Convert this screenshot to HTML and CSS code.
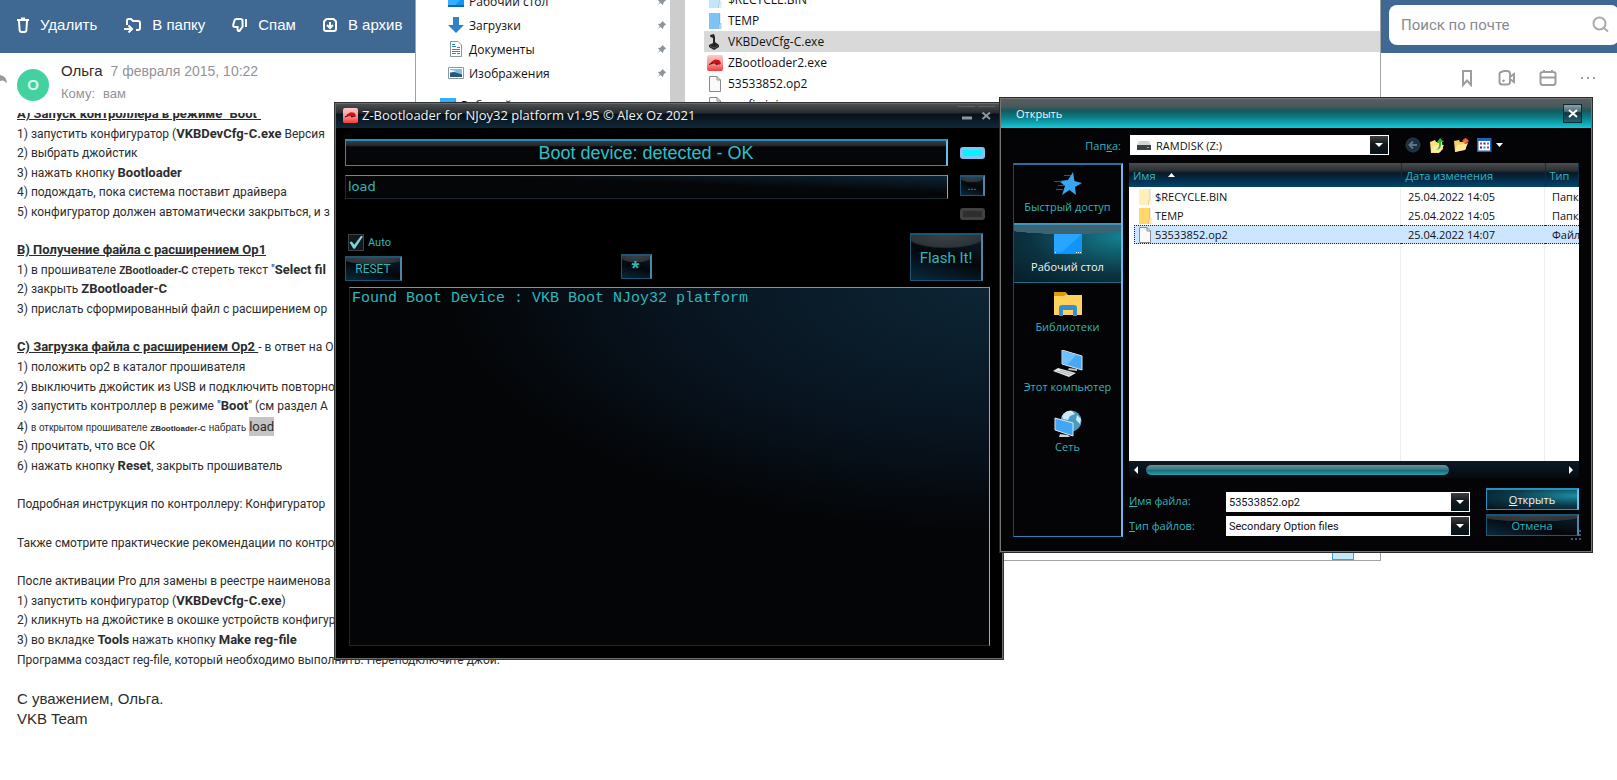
FILE: index.html
```
<!DOCTYPE html>
<html lang="ru">

<head>
  <meta charset="UTF-8" />
  <meta name="viewport" content="width=device-width, initial-scale=1.0" />
  <title>Z-Bootloader</title>
  <link rel="stylesheet" href="styles.css">
</head>

<body>
  <!-- shared icons -->
  <svg width="0" height="0" class="sprite" aria-hidden="true">
    <symbol id="pin" viewBox="0 0 12 12">
      <path d="M7 1 L11 5 L9.6 5.6 L8 7.6 L7.6 10 L4.8 7.4 L1 11 L4 6.8 L2 4.4 L4.4 4 L6.4 2.4 Z" fill="#8a959d" />
    </symbol>
    <symbol id="file" viewBox="0 0 16 16">
      <path d="M2.5 .5 H10 L13.5 4 V15.5 H2.5 Z" fill="#fafafa" stroke="#8b8b8b" />
      <path d="M10 .5 V4 H13.5" fill="none" stroke="#8b8b8b" />
    </symbol>
    <symbol id="desktop" viewBox="0 0 16 16">
      <path d="M0 1 H16 V14 H0 Z" fill="#1197f5" />
      <path d="M0 1 H16 V3 L5 14 H0 Z" fill="#35aeff" />
      <path d="M0 13 H16" stroke="#0a69b5" stroke-width="2" />
    </symbol>
    <symbol id="zboot" viewBox="0 0 16 16">
      <defs>
        <linearGradient id="zred" x1="0" y1="0" x2="0" y2="1">
          <stop offset="0" stop-color="#ffc9c9" />
          <stop offset=".5" stop-color="#f79a9a" />
          <stop offset="1" stop-color="#f33a3a" />
        </linearGradient>
      </defs>
      <rect width="16" height="16" rx="2" fill="url(#zred)" />
      <path d="M4 7 L8 4.5 L12 5 L14 8 L13 9.5 L9 8.5 L5 9 Z" fill="#d01414" />
      <path d="M2 9 L6 7 L5 9 L2 10 Z M8 8 L13 9 L9 10 Z" fill="#4a1010" />
    </symbol>
    <symbol id="folder" viewBox="0 0 16 16">
      <path d="M2 0 H13 V10 H14.5 V16 H2 Z" fill="currentColor" />
      <path d="M11 16 V12 L13 10 H14.5 V16 Z" fill="#fff" fill-opacity=".35" />
      <path d="M11.5 16 V12 L13 10.5 V0" fill="none" stroke="#000" stroke-opacity=".15" />
    </symbol>
  </svg>

  <div class="mail">
    <header class="mail-bar">
      <nav class="mail-tools">
        <button type="button">
          <svg width="12" height="16" viewBox="0 0 12 16" fill="none" stroke="#fff" stroke-width="2"><path d="M0 3 H12 M4 1.5 H8 M2 4 L2.6 13 Q2.8 15 4.6 15 H7.4 Q9.2 15 9.4 13 L10 4" /></svg>
          Удалить
        </button>
        <button type="button">
          <svg width="17" height="16" viewBox="0 0 17 16" fill="none" stroke="#fff" stroke-width="2"><path d="M3 8 V3.5 Q3 2 4.5 2 H7 L9 4 H14 Q16 4 16 6 V11 Q16 13 14 13 H12 M0 12 H7 M4.5 8.5 L8 12 L4.5 15.5" /></svg>
          В папку
        </button>
        <button type="button">
          <svg width="15" height="16" viewBox="0 0 15 16" fill="none" stroke="#fff" stroke-width="2"><path d="M14 2 V10 M10.5 3 L9 2 H4.5 Q3 2 2.5 3.4 L1.2 8 Q1 10 3 10 H5.6 V12.6 Q5.8 14.4 7.4 14 L10.6 9.5 Z" /></svg>
          Спам
        </button>
        <button type="button">
          <svg width="14" height="16" viewBox="0 0 14 16" fill="none" stroke="#fff" stroke-width="2"><path d="M3.5 2 H10.5 L13 4.5 V12 Q13 14 11 14 H3 Q1 14 1 12 V4.5 Z M7 5 V11 M4 8 L7 11 L10 8" /></svg>
          В архив
        </button>
      </nav>
      <label class="search">
        <input type="text" placeholder="Поиск по почте" aria-label="Поиск по почте" />
        <svg width="17" height="17" viewBox="0 0 17 17" fill="none" stroke="#a8abae" stroke-width="2"><circle cx="7.5" cy="7.5" r="6" /><path d="M12 12 L16 15.5" /></svg>
      </label>
    </header>

    <div class="letter-head">
      <svg class="reply" width="8" height="11" viewBox="0 0 8 11"><path d="M0 0 V8 Q4 6 7 11 Q7 3 0 2 Z" fill="#9a9a9a" /></svg>
      <div class="avatar">О</div>
      <div class="sender">
        <div class="from"><span class="name">Ольга</span><time>7 февраля 2015, 10:22</time></div>
        <div class="to"><span>Кому:</span><span>вам</span></div>
      </div>
      <div class="letter-tools">
        <button type="button" aria-label="Закладка"><svg width="16" height="18" viewBox="0 0 16 18"><path d="M4 2 H12 V16 L8 11.5 L4 16 Z" /></svg></button>
        <button type="button" aria-label="Видео"><svg width="18" height="18" viewBox="0 0 18 18"><path d="M3 3 L6 2 H9 Q12 2 12 5 V13 Q12 15.5 9 15.5 H4 Q1.5 15.5 1.5 13 V5 Q1.5 3.5 3 3 M12 8 L16 5 V13 L12 10 M4.5 12.5 L6.5 11" /></svg></button>
        <button type="button" aria-label="Календарь"><svg width="18" height="18" viewBox="0 0 18 18"><path d="M4 3 H14 Q16.5 3 16.5 5 V13.5 Q16.5 16 14 16 H4 Q1.5 16 1.5 13.5 V5 Q1.5 3 4 3 Z M1.5 8.5 H16.5 M5 1 V4 M13 1 V4" /></svg></button>
        <button type="button" aria-label="Ещё"><svg width="16" height="18" viewBox="0 0 16 18"><path d="M1 9 H3 M7 9 H9 M13 9 H15" /></svg></button>
      </div>
    </div>

    <main class="letter">
      <p>
        <b class="title">A) Запуск контроллера в режиме "Boot"</b><br>
        1) запустить конфигуратор (<b>VKBDevCfg-C.exe</b> Версия<br>
        2) выбрать джойстик<br>
        3) нажать кнопку <b>Bootloader</b><br>
        4) подождать, пока система поставит драйвера<br>
        5) конфигуратор должен автоматически закрыться, и з
      </p>
      <p>
        <b class="title">B) Получение файла с расширением Op1</b><br>
        1) в прошивателе <b class="small">ZBootloader-C</b> стереть текст "<b>Select fil</b><br>
        2) закрыть <b>ZBootloader-C</b><br>
        3) прислать сформированный файл с расширением ор
      </p>
      <p>
        <b class="title">C) Загрузка файла с расширением Op2 </b>- в ответ на О<br>
        1) положить op2 в каталог прошивателя<br>
        2) выключить джойстик из USB и подключить повторно<br>
        3) запустить контроллер в режиме "<b>Boot</b>" (см раздел A<br>
        4) <span class="small">в открытом прошивателе <b class="tiny">ZBootloader-C</b> набрать</span> <mark>load</mark><br>
        5) прочитать, что все ОК<br>
        6) нажать кнопку <b>Reset</b>, закрыть прошиватель
      </p>
      <p>Подробная инструкция по контроллеру: Конфигуратор</p>
      <p>Также смотрите практические рекомендации по контро</p>
      <p>
        После активации Pro для замены в реестре наименова<br>
        1) запустить конфигуратор (<b>VKBDevCfg-C.exe</b>)<br>
        2) кликнуть на джойстике в окошке устройств конфигур<br>
        3) во вкладке <b>Tools</b> нажать кнопку <b>Make reg-file</b><br>
        Программа создаст reg-file, который необходимо выполнить. Переподключите джой.
      </p>
      <p class="sign">С уважением, Ольга.<br>VKB Team</p>
    </main>
  </div>

  <section class="window explorer">
    <ul class="places">
      <li><svg width="16" height="16"><use href="#desktop" /></svg>Рабочий стол<svg class="pin" width="11" height="11"><use href="#pin" /></svg></li>
      <li><svg width="16" height="16" viewBox="0 0 16 16"><path d="M5 0 H11 V8 H16 L8 16 L0 8 H5 Z" fill="#2f82c9" /></svg>Загрузки<svg class="pin" width="11" height="11"><use href="#pin" /></svg></li>
      <li><svg width="16" height="16" viewBox="0 0 16 16"><path d="M2.5 .5 H10 L13.5 4 V15.5 H2.5 Z" fill="#fff" stroke="#8b979f" /><path d="M4 3.5 H7 M4 5.5 H8 M9 6.5 H12 M4 8.5 H12 M4 10.5 H12 M4 12.5 H8 M9 12.5 H12" stroke="#2c86c8" /></svg>Документы<svg class="pin" width="11" height="11"><use href="#pin" /></svg></li>
      <li><svg width="16" height="16" viewBox="0 0 16 16"><path d="M.5 2.5 H15.5 V13.5 H.5 Z" fill="#fff" stroke="#8b979f" /><path d="M2 4 H14 V12 H2 Z" fill="#7cc0ec" /><path d="M2 8 L6 7 L14 9.5 V12 H2 Z" fill="#2c5775" /><path d="M2 5 L8 6 L5 7 L2 7 Z" fill="#fff" /></svg>Изображения<svg class="pin" width="11" height="11"><use href="#pin" /></svg></li>
      <li class="parent"><svg width="16" height="16"><use href="#desktop" /></svg>Рабочий стол</li>
    </ul>
    <div class="splitter"></div>
    <ul class="files">
      <li><svg class="folder-pale" width="16" height="16"><use href="#folder" /></svg>$RECYCLE.BIN</li>
      <li><svg class="folder-blue" width="16" height="16"><use href="#folder" /></svg>TEMP</li>
      <li class="current"><svg width="16" height="16" viewBox="0 0 16 16"><path d="M3 1 L7 0 L8 3 L8 8 L12 11 V13 L7 16 L2 13 V11 L6 9 L6 4 L3.5 3 Z" fill="#232629" /><path d="M3 12 L7 14 L11 12" stroke="#555" fill="none" /></svg>VKBDevCfg-C.exe</li>
      <li><svg width="16" height="16"><use href="#zboot" /></svg>ZBootloader2.exe</li>
      <li><svg width="16" height="16"><use href="#file" /></svg>53533852.op2</li>
      <li><svg width="16" height="16"><use href="#file" /></svg>config.ini</li>
    </ul>
    <i class="view-toggle"></i>
  </section>

  <section class="window boot">
    <header class="boot-title">
      <svg width="15" height="15" viewBox="0 0 16 16"><use href="#zboot" /></svg>
      <h1>Z-Bootloader for NJoy32 platform v1.95 © Alex Oz 2021</h1>
      <button type="button" aria-label="Свернуть"><svg width="17" height="18" viewBox="0 0 17 18"><path d="M0 .5 H17" stroke="#5a6164" /><path d="M4 12 H14" stroke="#8f989c" stroke-width="3" /></svg></button>
      <button type="button" aria-label="Закрыть"><svg width="17" height="18" viewBox="0 0 17 18"><path d="M0 .5 H17" stroke="#5a6164" /><path d="M4.500 6.500 L12 13 M12 6.500 L4.500 13" stroke="#8f989c" stroke-width="2" /></svg></button>
    </header>
    <div class="boot-body">
      <div class="device">
        <button type="button" class="glossy status">Boot device: detected - OK</button>
        <i class="led on"></i>
        <input class="path" type="text" value="load" aria-label="Файл" />
        <button type="button" class="glossy browse">...</button>
        <i class="led off"></i>
      </div>
      <div class="actions">
        <div class="left">
          <label class="auto"><input type="checkbox" checked />Auto</label>
          <button type="button" class="glossy reset">RESET</button>
        </div>
        <button type="button" class="glossy star">*</button>
        <button type="button" class="glossy flash">Flash It!</button>
      </div>
      <textarea class="log" readonly aria-label="Журнал">Found Boot Device : VKB Boot NJoy32 platform</textarea>
    </div>
  </section>

  <section class="window dialog">
    <header class="dialog-title">
      <h2>Открыть</h2>
      <button type="button" aria-label="Закрыть"><svg width="10" height="9" viewBox="0 0 10 9"><path d="M1 1 L9 8 M9 1 L1 8" stroke="#fff" stroke-width="2" /></svg></button>
    </header>
    <div class="lookin">
      <label for="folder">Пап<u>к</u>а:</label>
      <div class="combo">
        <svg width="14" height="9" viewBox="0 0 14 9"><path d="M2 0 H12 L14 4 H0 Z" fill="#d2d5d6" /><path d="M0 4 H14 V9 H0 Z" fill="#3c4143" /><path d="M10 6.500 H12" stroke="#4be36c" /></svg>
        <select id="folder"><option>RAMDISK (Z:)</option></select>
        <i class="drop"></i>
      </div>
      <div class="lookin-tools">
        <button type="button" aria-label="Назад"><svg width="16" height="16" viewBox="0 0 16 16"><circle cx="8" cy="8" r="7" fill="#1a2f40" stroke="#2a3c4a" /><path d="M12 8 H4.500 M8 4.500 L4.500 8 L8 11.500" fill="none" stroke="#5f7484" stroke-width="2" /></svg></button>
        <button type="button" aria-label="Вверх"><svg width="16" height="16" viewBox="0 0 16 16"><path d="M1 5 L6 3 L7 5 L13 5 L14 12 L10 16 H2 Z" fill="#f7e27c" /><path d="M2 15 L5 8 H15 L11 15 Z" fill="#ffeea0" /><path d="M7 13 Q11 11 10 6 H7.500 L11 1 L15 5 H12 Q13 12 7 13" fill="#35b32e" /></svg></button>
        <button type="button" aria-label="Новая папка"><svg width="16" height="16" viewBox="0 0 16 16"><path d="M1 4 L6 3 L7 5 H13 V12 L2 15 Z" fill="#f5cf62" /><path d="M2 15 L4 8 L15 6 L12 13 Z" fill="#ffe795" /><path d="M12.500 1 V7 M9.500 4 H15.500" stroke="#f4512c" stroke-width="2" /><path d="M10.500 2 L14.500 6 M14.500 2 L10.500 6" stroke="#ff8a3c" /></svg></button>
        <button type="button" aria-label="Вид"><svg width="26" height="16" viewBox="0 0 26 16"><path d="M0 1 H14.500 V15 H0 Z" fill="#1d64c0" /><path d="M1.500 4 H13 V13.500 H1.500 Z" fill="#fff" /><path d="M3 6.500 H5 M10 10.500 H12" stroke="#d33" stroke-width="2" /><path d="M6.500 6.500 H8.500 M3 10.500 H5" stroke="#335" stroke-width="2" /><path d="M10 6.500 H12 M6.500 10.500 H8.500" stroke="#2a8ad8" stroke-width="2" /><path d="M19 6 H26 L22.500 10 Z" fill="#fff" /></svg></button>
      </div>
    </div>
    <div class="dialog-body">
      <nav class="sidebar">
        <button type="button">
          <svg width="28" height="28" viewBox="0 0 28 28"><path d="M19 2 L20.500 11 L28 13 L21 17 L22 25 L15.500 20 L8 25 L11 16 L5 11 L14 10 Z" fill="#38a6f2" /><path d="M10 5.500 H17 M0 11.500 H8 M4 15.500 H10 M2 19.500 H9" stroke="#1c5e8e" /></svg>
          Быстрый доступ
        </button>
        <button type="button" class="active">
          <svg width="28" height="28" viewBox="0 0 28 28"><path d="M0 4 H28 V24 H0 Z" fill="#1095fb" /><path d="M0 4 H28 L8 22 H0 Z" fill="#2aa5ff" /><path d="M1 22.500 H2 M22 22.500 H23 M24 22.500 H25 M26 22.500 H27" stroke="#fff" /></svg>
          Рабочий стол
        </button>
        <button type="button">
          <svg width="28" height="28" viewBox="0 0 28 28"><path d="M0 2 H11 L14 5 H28 V25 H0 Z" fill="#ffd25c" /><path d="M0 2 H11 L13 4 L10 6 H0 Z" fill="#e09a10" /><path d="M5 26 V18 Q5 15 8 15 H20 Q23 15 23 18 V26 H19 V20 H9 V26 Z" fill="#338fd6" /></svg>
          Библиотеки
        </button>
        <button type="button">
          <svg width="30" height="28" viewBox="0 0 30 28"><path d="M9 0 L29 6 V20 L9 14 Z" fill="#46aaf5" stroke="#dfe6ea" /><path d="M9 1 L23 5 L14 15 L10 13 Z" fill="#6fc2fb" /><path d="M16 18 L24 19 L24 21 L15 20 Z" fill="#b6bec4" /><path d="M0 21 L5 18 L23 23 L16 27 Z" fill="#e3e6e8" /><path d="M4 21 L17 25 M7 20 L20 24" stroke="#aab1b6" /></svg>
          Этот компьютер
        </button>
        <button type="button">
          <svg width="28" height="28" viewBox="0 0 28 28"><circle cx="17" cy="11" r="10.500" fill="#4a9bc0" /><path d="M8 6 Q12 0 18 1 L21 4 L16 6 L14 10 L9 9 Z M23 5 L27 9 L26 14 L22 10 Z" fill="#cfeaf4" /><path d="M1 8 L19 13 V26 L1 20 Z" fill="#3fa7f4" stroke="#dbe6ed" /><path d="M6 24 L14 25 L16 27 L5 27 Z" fill="#cbd2d6" /></svg>
          Сеть
        </button>
      </nav>
      <div class="pane">
        <div class="list">
          <table>
            <thead>
              <tr>
                <th class="col-name">Имя<svg width="7" height="4" viewBox="0 0 7 4"><path d="M0 4 L3.500 0 L7 4 Z" fill="#fff" /></svg></th>
                <th class="col-date">Дата изменения</th>
                <th class="col-type">Тип</th>
              </tr>
            </thead>
            <tbody>
              <tr>
                <td><span class="file"><svg class="folder-faded" width="16" height="16"><use href="#folder" /></svg>$RECYCLE.BIN</span></td>
                <td><span>25.04.2022 14:05</span></td>
                <td><span>Папка</span></td>
              </tr>
              <tr>
                <td><span class="file"><svg class="folder-yellow" width="16" height="16"><use href="#folder" /></svg>TEMP</span></td>
                <td><span>25.04.2022 14:05</span></td>
                <td><span>Папка</span></td>
              </tr>
              <tr class="selected">
                <td><span class="file"><svg width="16" height="16"><use href="#file" /></svg>53533852.op2</span></td>
                <td><span>25.04.2022 14:07</span></td>
                <td><span>Файл</span></td>
              </tr>
            </tbody>
          </table>
        </div>
        <div class="scrollbar"><i class="arrow prev"></i><div class="track"><div class="thumb"></div></div><i class="arrow next"></i></div>
        <form class="fields">
          <label for="fname"><u>И</u>мя файла:</label>
          <div class="combo"><input id="fname" type="text" value="53533852.op2" /><i class="drop"></i></div>
          <button type="button" class="glossy open"><u>О</u>ткрыть</button>
          <label for="ftype"><u>Т</u>ип файлов:</label>
          <div class="combo"><select id="ftype"><option>Secondary Option files</option></select><i class="drop"></i></div>
          <button type="button" class="glossy cancel">Отмена</button>
        </form>
      </div>
    </div>
    <svg class="grip" width="12" height="12" viewBox="0 0 12 12"><path d="M8 2 H10 M8 6 H10 M0 10 H2 M4 10 H6 M8 10 H10" stroke="#3c5a78" stroke-width="2" /></svg>
  </section>
</body>

</html>
```
FILE: styles.css
```
* {
  box-sizing: border-box;
}

body {
  margin: 0;
  min-height: 100vh;
  position: relative;
  overflow: hidden;
  background: #fff;
  font-family: "Liberation Sans", Arial, sans-serif;
  font-size: 13px;
  color: #2c2d2e;
}

.sprite {
  position: absolute;
}

svg {
  flex: none;
}

button {
  font: inherit;
  color: inherit;
  background: none;
  border: none;
  padding: 0;
}

input,
select,
textarea {
  font: inherit;
  color: inherit;
  border: none;
  outline: none;
  min-width: 0;
}

ul {
  list-style: none;
  margin: 0;
  padding: 0;
}

/* Mail page */
.mail-bar {
  display: flex;
  align-items: center;
  justify-content: space-between;
  height: 53px;
  padding: 0 0 4px 17px;
  background: #3f6893;
  color: #fff;
}

.mail-tools {
  display: flex;
  gap: 27px;
}

.mail-tools button {
  display: flex;
  align-items: center;
  gap: 11px;
  font-size: 15px;
}

.search {
  display: flex;
  align-items: center;
  width: 230px;
  height: 40px;
  margin-right: -2px;
  padding: 0 10px 0 12px;
  background: #fff;
  border-radius: 8px;
}

.search input {
  flex: 1;
  font-size: 15px;
  font-family: Roboto, sans-serif;
  background: none;
  padding: 0;
}

.search input::placeholder {
  color: #87898f;
}

.letter-head {
  display: flex;
  align-items: center;
  height: 60px;
  padding: 0 21px 0 0;
  color: #919399;
}

.reply {
  margin-right: 9px;
  margin-bottom: 10px;
}

.avatar {
  width: 32px;
  height: 32px;
  margin-top: 3px;
  border-radius: 50%;
  background: #42d2a0;
  color: #d8f8ec;
  font-size: 15px;
  font-weight: bold;
  line-height: 31px;
  text-align: center;
}

.sender {
  flex: 1;
  margin-left: 12px;
}

.from {
  display: flex;
  align-items: baseline;
  gap: 8px;
  font-size: 14px;
  line-height: 22px;
}

.from .name {
  font-size: 15px;
  color: #2c2d2e;
}

.to {
  display: flex;
  gap: 8px;
  font-size: 13px;
  line-height: 24px;
}

.letter-tools {
  display: flex;
  gap: 23px;
  margin-bottom: 10px;
}

.letter-tools svg {
  display: block;
  fill: none;
  stroke: #9b9da0;
  stroke-width: 2;
}

.letter {
  overflow: hidden;
  white-space: nowrap;
  font-family: Roboto, "Liberation Sans", sans-serif;
  font-size: 12px;
  line-height: 1.63;
  padding-left: 17px;
}

.letter b {
  font-size: 13px;
  line-height: 1;
}

.letter p {
  margin: 0 0 19px;
}

.letter p:first-child {
  margin-top: -8px;
}

.letter .title {
  text-decoration: underline;
  white-space: pre;
}

.letter .small,
.letter .tiny {
  font-family: "Liberation Sans", Arial, sans-serif;
  line-height: 1;
}

.letter .small {
  font-size: 10px;
}

.letter .tiny {
  font-size: 8px;
}

.letter mark {
  display: inline-block;
  background: #c4c4c4;
  color: inherit;
  font-size: 13px;
  line-height: 19px;
}

.letter .sign {
  font-family: "Liberation Sans", Arial, sans-serif;
  font-size: 15px;
  line-height: 20px;
}

/* Windows on the desktop */
.window {
  position: absolute;
}

.explorer {
  left: 415px;
  top: -12px;
  width: 966px;
  height: 573px;
  display: flex;
  background: #fff;
  border: 1px solid #a3a3a3;
  color: #111;
  font-family: "Open Sans", "Noto Sans", sans-serif;
  font-size: 12px;
}

.places {
  width: 254px;
  padding: 0 3px 0 32px;
}

.places li {
  display: flex;
  align-items: center;
  gap: 5px;
  height: 24px;
}

.places .parent {
  margin: 8px 0 0 -8px;
}

.places .pin {
  margin-left: auto;
}

.splitter {
  width: 15px;
  background: #cdcdcd;
}

.files {
  flex: 1;
  margin-left: 19px;
}

.files li {
  display: flex;
  align-items: center;
  gap: 5px;
  height: 21px;
  padding-left: 3px;
}

.files .current {
  background: #d9d9d9;
}

.folder-pale {
  color: #c5e5fa;
}

.folder-blue {
  color: #7cc4f5;
}

.folder-yellow {
  color: #ffd869;
}

.folder-faded {
  color: #ffefb9;
}

/* corner toggle lies over the file list */
.view-toggle {
  position: absolute;
  right: 26px;
  bottom: 0;
  width: 22px;
  height: 22px;
  background: #c3e9fc;
  border: 1px solid #3b9fdc;
}

/* Bootloader */
.boot {
  left: 334px;
  top: 102px;
  width: 670px;
  height: 558px;
  display: flex;
  flex-direction: column;
  background: #000;
  border: 1px solid #333;
  box-shadow: inset 0 0 0 1px #6b6b6b;
  color: #2fb6bd;
}

.boot-title {
  display: flex;
  align-items: center;
  gap: 3px;
  height: 24px;
  padding: 0 7px 2px;
  margin: 1px 1px 0;
  background: linear-gradient(#4b5052, #26292b 38%, #071019 42%, #10283a);
}

.boot-title h1 {
  flex: 1;
  margin: 0 0 0 1px;
  color: #f2f2f2;
  font: 13px/20px "Open Sans", "Noto Sans", sans-serif;
}

.boot-title button svg {
  display: block;
}

.boot-body {
  flex: 1;
  display: flex;
  flex-direction: column;
  padding: 11px 13px 13px 10px;
}

.device {
  display: grid;
  grid-template-columns: 1fr 25px;
  column-gap: 12px;
  row-gap: 9px;
  align-items: center;
  margin-right: 5px;
}

.glossy {
  background: radial-gradient(ellipse 60% 30% at 50% 0, #3a4247, #2c343a 90%, transparent), linear-gradient(15deg, #0a2a3f, #04070a 50%, #0b1f2d);
  border: 2px solid #1d5575;
  border-right-color: #4e87a3;
  border-left-width: 1px;
  border-bottom-width: 1px;
}

.status {
  height: 27px;
  border-color: #2a8fc0;
  border-right-color: #67bfec;
  background: linear-gradient(#3a3d3f, #222628 20%, #05070a 24%, #030507);
  color: #2bc0c8;
  font-size: 18px;
  line-height: 20px;
}

.led {
  height: 12px;
  border: 3px solid #7fc4f4;
  border-radius: 3px;
  background: #00f6ff;
}

.led.off {
  grid-column: 2;
  background: #2e2e2e;
  border-color: #414141;
}

.path {
  height: 24px;
  padding: 0 2px 2px;
  border: 1px solid #1f2a33;
  border-top-color: #4f93bd;
  border-right-color: #74b7e4;
  background: linear-gradient(to top right, #050608 60%, #0d2536);
  font: 13px "DejaVu Sans", sans-serif;
}

.browse {
  height: 21px;
  margin-bottom: 3px;
  font-size: 11px;
}

.actions {
  display: flex;
  justify-content: space-between;
  align-items: flex-end;
  margin: 13px 7px 6px 0;
}

.left {
  display: flex;
  flex-direction: column;
  align-items: flex-start;
  gap: 5px;
}

.auto {
  display: flex;
  align-items: center;
  gap: 4px;
  margin-left: 3px;
  font: 11px Roboto, sans-serif;
}

.auto input {
  appearance: none;
  width: 16px;
  height: 17px;
  margin: 0;
  background: #12181c;
  border: 1px solid #3c4245;
}

.auto input:checked::after {
  content: "";
  display: block;
  height: 14px;
  background: #7fd3d8;
  clip-path: polygon(4% 52%, 20% 46%, 38% 70%, 86% 6%, 100% 10%, 42% 98%, 30% 96%);
}

.reset {
  width: 57px;
  height: 25px;
  font: 12px Roboto, sans-serif;
}

.star {
  width: 31px;
  height: 25px;
  margin-right: 40px;
  margin-bottom: 2px;
  font: bold 20px/24px "Liberation Sans", Arial, sans-serif;
}

.flash {
  width: 73px;
  height: 48px;
  font: 15px Roboto, sans-serif;
}

.log {
  flex: 1;
  margin-left: 4px;
  padding: 2px;
  resize: none;
  border: 1px solid #1e2832;
  border-top-color: #6d9ab5;
  border-right-color: #74b7e4;
  background: radial-gradient(ellipse 100% 80% at 100% 0, #0d2535, #081420 50%, #040507 85%);
  font: 15px "Liberation Mono", "Courier New", monospace;
}

/* Open file dialog */
.dialog {
  left: 999px;
  top: 97px;
  width: 594px;
  height: 456px;
  display: flex;
  flex-direction: column;
  background: #040406;
  border: 1px solid #2b2b2b;
  box-shadow: inset 0 0 0 1px #757575;
  color: #2fb6bd;
  font-family: "Open Sans", "Noto Sans", sans-serif;
  font-size: 11px;
}

.dialog-title {
  display: flex;
  align-items: center;
  justify-content: space-between;
  height: 29px;
  padding: 1px 9px 2px 15px;
  margin: 1px 1px 0;
  background: linear-gradient(#576062, #4c5759 25%, #12595e 40%, #0d7f8a 65%, #12c8da);
}

.dialog-title h2 {
  margin: 0;
  font-size: 11px;
  font-weight: normal;
  color: #f4f4f4;
}

.dialog-title button {
  display: grid;
  place-items: center;
  width: 19px;
  height: 19px;
  border: 1px solid #0e2b33;
  background: linear-gradient(#8ba4ab, #4c666e 40%, #14343d 45%, #1d6470);
}

.lookin {
  display: flex;
  align-items: center;
  height: 20px;
  margin: 7px 13px 8px 13px;
}

.lookin label {
  width: 108px;
  text-align: right;
}

.combo {
  display: flex;
  align-items: center;
  height: 20px;
  padding: 1px;
  background: #fff;
  color: #111;
}

.lookin .combo {
  width: 259px;
  margin-left: 9px;
  padding-left: 7px;
}

.combo select,
.combo input {
  flex: 1;
  appearance: none;
  height: 18px;
  padding: 0 2px;
  background: none;
}

.combo svg + select {
  padding-left: 5px;
}

.drop {
  display: grid;
  place-items: center;
  width: 18px;
  height: 18px;
  background: linear-gradient(#3b4043, #14181b 45%, #05131c);
}

.drop::after {
  content: "";
  border: 4px solid transparent;
  border-top-color: #fff;
  border-bottom: none;
}

.lookin-tools {
  display: flex;
  gap: 8px;
  margin-left: 16px;
}

.lookin-tools svg {
  display: block;
}

.dialog-body {
  flex: 1;
  display: flex;
  gap: 6px;
  padding: 0 13px 15px 13px;
}

.sidebar {
  width: 110px;
  border: 1px solid #1d4a66;
  border-top: 2px solid #2c6f9c;
  border-right: 2px solid #6bb8ee;
  border-bottom: 1px solid #2f81b2;
}

.sidebar button {
  display: flex;
  flex-direction: column;
  align-items: center;
  gap: 1px;
  width: 100%;
  height: 60px;
  padding-top: 5px;
  white-space: nowrap;
}

.sidebar button:first-child {
  height: 58px;
}

.sidebar .active {
  margin-bottom: 2px;
  color: #f4f4f4;
  border-top: 2px solid #3f94bb;
  border-bottom: 1px solid #1d6d86;
  background: radial-gradient(ellipse 70% 16% at 50% 0, #3c6374 98%, transparent), radial-gradient(ellipse at 100% 20%, #14808f, #0b3341 60%, #071c28);
}

.pane {
  flex: 1;
  min-width: 0;
  display: flex;
  flex-direction: column;
}

.list {
  height: 298px;
  overflow: hidden;
  color: #111;
  background: linear-gradient(#e9eff4, #e9eff4) 271px 0 / 1px 100% no-repeat,
    linear-gradient(#e9eff4, #e9eff4) 415px 0 / 1px 100% no-repeat, #fff;
}

.list table {
  width: 100%;
  table-layout: fixed;
  border-collapse: collapse;
}

.list th {
  height: 24px;
  padding: 0 4px;
  border-right: 1px solid #0b2f45;
  background: linear-gradient(#4a4d4f, #2d3133 30%, #06182a 42%, #03456f);
  color: #2fb6bd;
  font-weight: normal;
  text-align: left;
  white-space: nowrap;
}

.list th svg {
  margin-left: 12px;
  margin-bottom: 3px;
}

.col-name {
  width: 272px;
}

.col-date {
  width: 144px;
}

.list td {
  padding: 0;
  overflow: hidden;
  white-space: nowrap;
}

.list td span {
  display: flex;
  align-items: center;
  height: 19px;
  padding-left: 7px;
}

.list .file {
  gap: 2px;
  margin-left: 5px;
  padding-left: 3px;
}

.selected span {
  background: #cce6ff;
  border-top: 1px dotted #222;
  border-bottom: 1px dotted #222;
}

.selected .file {
  border-left: 1px dotted #222;
  padding-left: 2px;
}

.scrollbar {
  display: flex;
  align-items: center;
  justify-content: space-between;
  height: 17px;
  padding: 0 6px 0 5px;
  background: linear-gradient(#0b1b26, #060a0f);
}

.arrow {
  border: 4px solid transparent;
}

.arrow.prev {
  border-right-color: #fff;
  border-left: none;
}

.arrow.next {
  border-left-color: #fff;
  border-right: none;
}

.track {
  flex: 1;
  margin: 0 8px;
}

.thumb {
  width: 73%;
  height: 10px;
  border-radius: 5px;
  background: linear-gradient(#6f8f98, #3d7580 45%, #0f6b79 50%, #2a9dac);
}

.fields {
  display: grid;
  grid-template-columns: 97px 1fr 93px;
  grid-template-rows: 24px 22px;
  row-gap: 2px;
  margin-top: 10px;
}

.fields .combo {
  align-self: end;
  margin-right: 16px;
  font-family: Roboto, sans-serif;
}

.fields label {
  align-self: center;
}

.fields .glossy {
  height: 22px;
}

.fields .open {
  color: #f4f4f4;
  border-color: #2a93bb;
  border-right-color: #62c6ee;
  background: radial-gradient(ellipse at 100% 30%, #1a8fa5, #0d3b4b 50%, #04131c);
}

/* resize handle lies over the corner */
.grip {
  position: absolute;
  right: 9px;
  bottom: 11px;
}
```
